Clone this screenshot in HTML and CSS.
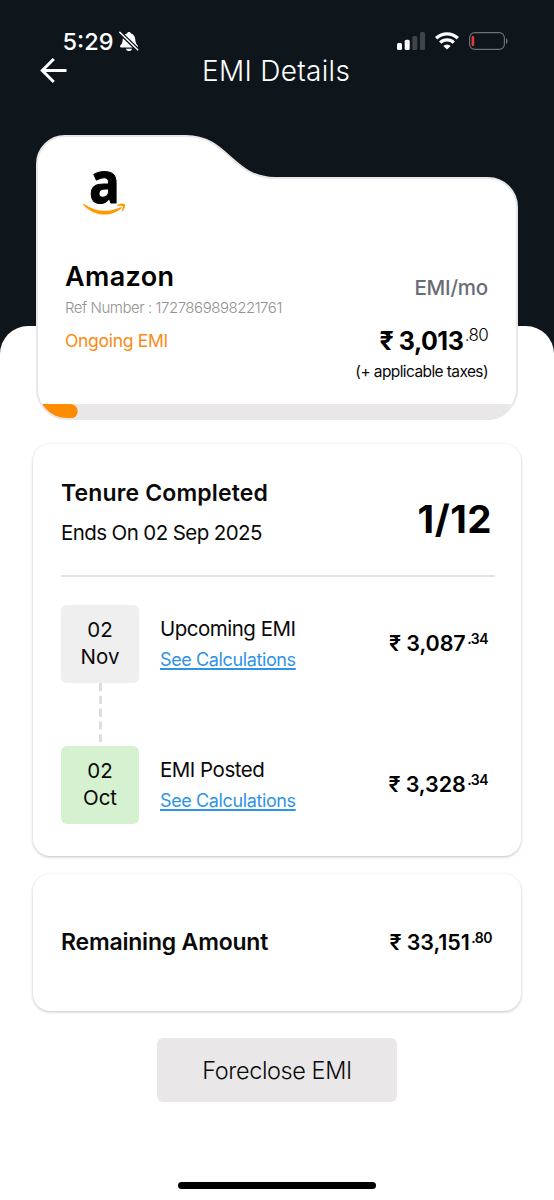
FILE: index.html
```html
<!DOCTYPE html>
<html lang="en">
<head>
    <meta charset="UTF-8">
    <meta name="viewport" content="width=device-width, initial-scale=1.0">
    <title>EMI Details</title>
    <link rel="stylesheet" href="styles.css">
</head>
<body>
    <div class="screen">
        <header class="top">
            <div class="statusbar">
                <span class="time">5:29</span>
                <svg class="bell" width="20" height="21" viewBox="0 0 20 21">
                    <path d="M10 1c-1 0-1.8.6-2 1.5C5.300 3.200 3.800 5.600 3.700 8.500c-.1 3-.9 4.400-2.200 5.700-.9 1-.4 2.300.9 2.300h15.200c1.300 0 1.800-1.300.9-2.300-1.300-1.300-2.100-2.700-2.200-5.700-.1-2.900-1.600-5.300-4.300-6C11.800 1.600 11 1 10 1z" fill="#fff"/>
                    <path d="M6.900 17.700h6.200c-.4 1.500-1.600 2.400-3.100 2.400s-2.700-.9-3.100-2.400z" fill="#fff"/>
                    <path d="M0 .6 19.500 19.500" stroke="#0e161c" stroke-width="4"/>
                    <path d="M.8 1.300 18.700 18.700" stroke="#fff" stroke-width="1.500" stroke-linecap="round"/>
                </svg>
                <svg class="signal" width="28" height="18" viewBox="0 0 28 18">
                    <rect x="0" y="11" width="5" height="7" rx="1.500" fill="#fff"/>
                    <rect x="7.700" y="7.700" width="5" height="10.300" rx="1.500" fill="#fff"/>
                    <rect x="15.300" y="4" width="5" height="14" rx="1.500" fill="#3f464b"/>
                    <rect x="23" y="0" width="5" height="18" rx="1.500" fill="#3f464b"/>
                </svg>
                <svg class="wifi" width="24" height="18" viewBox="0 0 24 18">
                    <g fill="none" stroke="#fff" stroke-width="3.300">
                        <path d="M1.200 6.300a15.500 15.500 0 0 1 21.600 0"/>
                        <path d="M5.200 10.600a9.800 9.800 0 0 1 13.600 0"/>
                    </g>
                    <path d="M12 17.600 8.300 13.900a5.300 5.300 0 0 1 7.400 0z" fill="#fff"/>
                </svg>
                <svg class="battery" width="39" height="18" viewBox="0 0 39 18">
                    <rect x=".6" y=".6" width="34.800" height="16.800" rx="5.200" fill="none" stroke="#6b7176" stroke-width="1.200"/>
                    <rect x="2.600" y="4" width="2.600" height="10" rx="1" fill="#e8383d"/>
                    <path d="M37 6c2 .8 2 5.200 0 6z" fill="#6b7176"/>
                </svg>
            </div>
            <div class="navbar">
                <svg class="back" width="27" height="26" viewBox="0 0 27 26">
                    <path d="M26.500 12.500H2.500M13.800 1 2.300 12.500 13.800 24" fill="none" stroke="#fff" stroke-width="3"/>
                </svg>
                <h1 class="title">EMI Details</h1>
            </div>
        </header>

        <main class="sheet">
            <section class="summary">
                <svg class="folder" width="482" height="285" viewBox="36 135 482 285">
                    <defs>
                        <clipPath id="inner">
                            <path d="M36.500 160V380C37 402 45 418 66 418.300H485Q515.500 418.300 517 380V160z"/>
                        </clipPath>
                    </defs>
                    <path d="M37 164a28 28 0 0 1 28-28H186C228 136 232 178 275 178H488a29 29 0 0 1 29 29V389a30 30 0 0 1-30 30H67a30 30 0 0 1-30-30z" fill="#fff"/>
                    <g clip-path="url(#inner)">
                        <rect x="36" y="404" width="482" height="16" fill="#e9e7e8"/>
                        <rect x="20" y="404" width="57.700" height="14.500" rx="7.200" fill="#ff8c00"/>
                    </g>
                    <path d="M37 164a28 28 0 0 1 28-28H186C228 136 232 178 275 178H488a29 29 0 0 1 29 29V389a30 30 0 0 1-30 30H67a30 30 0 0 1-30-30z" fill="none" stroke="#e7e6e9" stroke-width="2"/>
                </svg>
                <svg class="logo" width="44" height="58" viewBox="82 158 44 58">
                    <text class="logo-letter" x="89" y="203" textLength="31" lengthAdjust="spacingAndGlyphs">a</text>
                    <path d="M83.300 205C95 217.500 111 217 121.500 208.200 122 207.500 121.300 206.800 120.500 207.200 108 212.800 96 212 84 204 83.400 203.700 82.900 204.300 83.300 205z" fill="#ff9900"/>
                    <path d="M116.800 205.500C119.500 203.200 123.500 203.200 125 204.200 125.500 206.800 124.300 209.800 122 211.800 121.700 212 121.400 211.700 121.600 211.300 122.400 209.200 123.200 206.900 122.700 206.200 122 205.500 119.500 205.800 117 206z" fill="#ff9900"/>
                </svg>
                <div class="summary-row">
                    <div class="merchant">
                        <h2 class="name">Amazon</h2>
                        <p class="ref">Ref Number : 1727869898221761</p>
                        <p class="state">Ongoing EMI</p>
                    </div>
                    <div class="monthly">
                        <p class="permonth">EMI/mo</p>
                        <p class="price"><span class="whole">₹ 3,013</span><span class="cents">.80</span></p>
                        <p class="taxes">(+ applicable taxes)</p>
                    </div>
                </div>
            </section>

            <section class="card tenure">
                <div class="tenure-head">
                    <div>
                        <h3 class="heading">Tenure Completed</h3>
                        <p class="ends">Ends On 02 Sep 2025</p>
                    </div>
                    <p class="count">1/12</p>
                </div>
                <div class="emi">
                    <div class="date">02<br>Nov</div>
                    <div class="info">
                        <p class="label">Upcoming EMI</p>
                        <a class="link">See Calculations</a>
                    </div>
                    <p class="amount"><span class="whole">₹ 3,087</span><span class="cents">.34</span></p>
                </div>
                <svg class="dashes" width="3" height="63" viewBox="0 0 3 63">
                    <path d="M1.500 0V59" stroke="#dddddd" stroke-width="3" stroke-dasharray="8.200 4.600"/>
                </svg>
                <div class="emi">
                    <div class="date posted">02<br>Oct</div>
                    <div class="info">
                        <p class="label">EMI Posted</p>
                        <a class="link">See Calculations</a>
                    </div>
                    <p class="amount"><span class="whole">₹ 3,328</span><span class="cents">.34</span></p>
                </div>
            </section>

            <section class="card remaining">
                <h3 class="heading remaining-heading">Remaining Amount</h3>
                <p class="amount remaining-amount"><span class="whole">₹ 33,151</span><span class="cents">.80</span></p>
            </section>

            <button class="foreclose">Foreclose EMI</button>
            <div class="homebar"></div>
        </main>
    </div>
</body>
</html>
```

FILE: styles.css
```css
* {
    box-sizing: border-box;
}

body {
    margin: 0;
    font-family: "Inter", "Noto Sans", sans-serif;
    color: #0a0a0a;
}

h1, h2, h3, p {
    margin: 0;
}

.screen {
    width: 554px;
    height: 1200px;
    background-color: #0e161c;
    display: flex;
    flex-direction: column;
    overflow: hidden;
}

/* dark header */
.top {
    height: 326px;
    flex: none;
    padding-top: 26px;
}

.statusbar {
    display: flex;
    align-items: center;
    height: 30px;
    padding-left: 62.5px;
    padding-right: 46px;
}

.time {
    color: #fff;
    font-size: 23.5px;
    font-weight: 500;
    line-height: 30px;
    width: 56.5px;
    padding-top: 1px;
    white-space: nowrap;
}

.signal {
    margin-left: auto;
}

.wifi {
    margin-left: 10px;
}

.battery {
    margin-left: 10px;
}

.navbar {
    display: flex;
    align-items: center;
    height: 30px;
    padding-left: 39.5px;
}

.title {
    color: #fff;
    font-size: 28px;
    font-weight: 300;
    line-height: 30px;
    letter-spacing: 0.3px;
    margin-left: 135.5px;
    white-space: nowrap;
}

/* white part */
.sheet {
    flex: 1;
    background-color: #fff;
    border-radius: 28px 28px 0 0;
    display: flex;
    flex-direction: column;
    align-items: center;
}

.summary {
    position: relative;
    width: 482px;
    height: 285px;
    flex: none;
    margin-top: -191px;
    padding: 23px 30px 0 29px;
}

.folder {
    position: absolute;
    top: 0;
    left: 0;
}

.logo {
    position: relative;
    display: block;
    margin-left: 17px;
    overflow: visible;
}

.logo-letter {
    font-family: "Open Sans", sans-serif;
    font-weight: 700;
    font-size: 57px;
    fill: #000;
    stroke: #000;
    stroke-width: 1px;
}

.summary-row {
    position: relative;
    display: flex;
    justify-content: space-between;
    padding-top: 42px;
    white-space: nowrap;
}

.name {
    font-size: 27px;
    font-weight: 600;
    line-height: 36px;
    letter-spacing: 0.35px;
    padding-top: 1px;
    color: #000;
}

.ref {
    font-size: 15px;
    font-weight: 300;
    line-height: 24px;
    letter-spacing: -0.46px;
    color: #929292;
    margin-top: 1px;
}

.state {
    font-size: 17.5px;
    font-weight: 400;
    line-height: 28px;
    letter-spacing: -0.3px;
    color: #f98b15;
    margin-top: 7px;
}

.monthly {
    display: flex;
    flex-direction: column;
    align-items: flex-end;
    padding-top: 16px;
}

.permonth {
    font-size: 20.5px;
    font-weight: 450;
    line-height: 28px;
    letter-spacing: -0.2px;
    color: #696d75;
}

.price {
    display: flex;
    color: #000;
    font-size: 25px;
    font-weight: 700;
    line-height: 34px;
    letter-spacing: -0.5px;
    margin-top: 22px;
}

.price .cents {
    font-size: 17px;
    font-weight: 350;
    line-height: 22px;
    letter-spacing: -0.7px;
    margin-left: 1.5px;
}

.taxes {
    font-size: 15.5px;
    line-height: 24px;
    letter-spacing: -0.6px;
    margin-top: 2px;
}

.card {
    width: 488px;
    flex: none;
    background-color: #fff;
    border-radius: 17px;
    box-shadow: 0 1px 3px rgba(0, 0, 0, 0.25);
}

/* tenure card */
.tenure {
    height: 412px;
    margin-top: 24px;
    padding: 0 26px 0 28px;
}

.tenure-head {
    display: flex;
    justify-content: space-between;
    height: 133px;
    padding: 34px 3px 0 0;
    border-bottom: 2px solid #e4e4e4;
    white-space: nowrap;
}

.heading {
    font-size: 23px;
    font-weight: 600;
    line-height: 30px;
    letter-spacing: 0.15px;
}

.ends {
    font-size: 20.5px;
    font-weight: 400;
    line-height: 30px;
    letter-spacing: -0.6px;
    margin-top: 10px;
}

.count {
    font-size: 38.5px;
    font-weight: 700;
    line-height: 50px;
    letter-spacing: 0.5px;
    margin-top: 16px;
    color: #000;
}

.emi {
    display: flex;
    height: 78px;
    padding-right: 7px;
    white-space: nowrap;
}

.tenure-head + .emi {
    margin-top: 27.5px;
}

.date {
    width: 78px;
    height: 78px;
    flex: none;
    border-radius: 6px;
    background-color: #efefef;
    font-size: 20.5px;
    line-height: 27.5px;
    text-align: center;
    padding-top: 11px;
}

.posted {
    background-color: #d5f1d0;
}

.info {
    margin-left: 21px;
    padding-top: 9.5px;
}

.label {
    font-size: 20.5px;
    font-weight: 400;
    line-height: 30px;
    letter-spacing: -0.5px;
}

.link {
    display: block;
    font-size: 18px;
    font-weight: 400;
    line-height: 26px;
    letter-spacing: -0.38px;
    margin-top: 3px;
    color: #2f93e6;
    text-decoration: underline;
    text-underline-offset: 2px;
    text-decoration-thickness: 1.5px;
}

.amount {
    display: flex;
    margin-left: auto;
    margin-top: 23px;
    font-size: 21.5px;
    font-weight: 600;
    line-height: 30px;
    letter-spacing: -0.1px;
    color: #000;
}

.amount .cents {
    font-size: 14px;
    line-height: 22px;
    letter-spacing: -0.5px;
    margin-left: 1.5px;
}

.dashes {
    display: block;
    margin-left: 37.5px;
}

/* remaining card */
.remaining {
    display: flex;
    justify-content: space-between;
    height: 137px;
    margin-top: 17.5px;
    padding: 53px 29px 0 28px;
    white-space: nowrap;
}

.remaining-heading {
    letter-spacing: -0.2px;
}

.remaining-amount {
    margin-top: 0;
}

.foreclose {
    flex: none;
    width: 240px;
    height: 64px;
    margin-top: 27.5px;
    padding: 0;
    border: none;
    border-radius: 6px;
    background-color: #e9e7e8;
    color: #0a0a0a;
    font-family: inherit;
    font-size: 23.5px;
    font-weight: 300;
    letter-spacing: -0.42px;
}

.homebar {
    flex: none;
    width: 198px;
    height: 7px;
    margin-top: 79.5px;
    border-radius: 4px;
    background-color: #000;
}
```
